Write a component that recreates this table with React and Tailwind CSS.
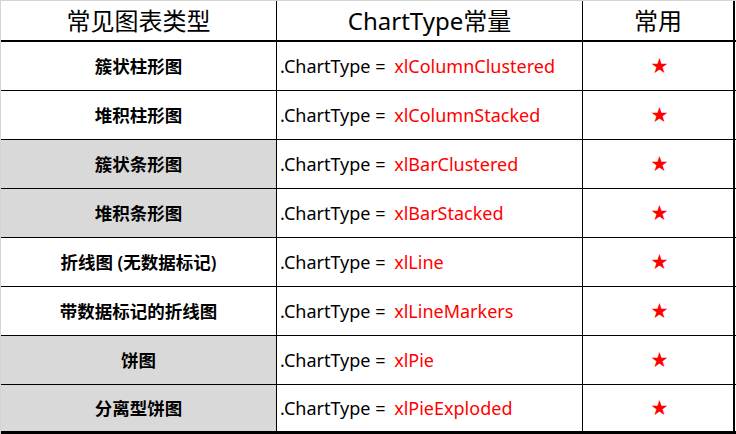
import React from "react";

const rows = [
  { name: "簇状柱形图", type: "xlColumnClustered", gray: false },
  { name: "堆积柱形图", type: "xlColumnStacked", gray: false },
  { name: "簇状条形图", type: "xlBarClustered", gray: true },
  { name: "堆积条形图", type: "xlBarStacked", gray: true },
  { name: "折线图 (无数据标记)", type: "xlLine", gray: false },
  { name: "带数据标记的折线图", type: "xlLineMarkers", gray: false },
  { name: "饼图", type: "xlPie", gray: true },
  { name: "分离型饼图", type: "xlPieExploded", gray: true },
];

const font = "font-['Noto_Sans','Noto_Sans_CJK_SC',sans-serif]";

export default function App() {
  return (
    <div className={`w-[736px] h-[434px] bg-white border-t border-l border-[#d4d4d4] text-black ${font}`}>
      {/* Header */}
      <div className="flex h-[41px] border-b-2 border-black">
        <div className="w-[276px] shrink-0 border-r border-black flex items-center justify-center text-[24px] leading-none">
          常见图表类型
        </div>
        <div className="w-[306px] shrink-0 border-r border-black flex items-center justify-center text-[24px] leading-none">
          ChartType常量
        </div>
        <div className="w-[152px] shrink-0 border-r-2 border-black flex items-center justify-center text-[24px] leading-none">
          常用
        </div>
      </div>

      {rows.map((r, i) => (
        <div
          key={r.type}
          className={`flex h-[49px] border-black ${i === rows.length - 1 ? "border-b-[3px]" : "border-b"}`}
        >
          <div
            className={`w-[276px] shrink-0 border-r border-black flex items-center justify-center text-[17.5px] font-semibold ${
              r.gray ? "bg-[#d9d9d9]" : ""
            }`}
          >
            {r.name}
          </div>
          <div className="w-[306px] shrink-0 border-r border-black flex items-center pl-[3px] text-[18px] whitespace-nowrap">
            <span className="whitespace-pre">.ChartType = </span>
            <span className="ml-[4px] text-[#ff0000]">{r.type}</span>
          </div>
          <div className="w-[152px] shrink-0 border-r-2 border-black flex items-center justify-center pl-[3px] text-[17px] text-[#ff0000]">
            ★
          </div>
        </div>
      ))}
    </div>
  );
}
